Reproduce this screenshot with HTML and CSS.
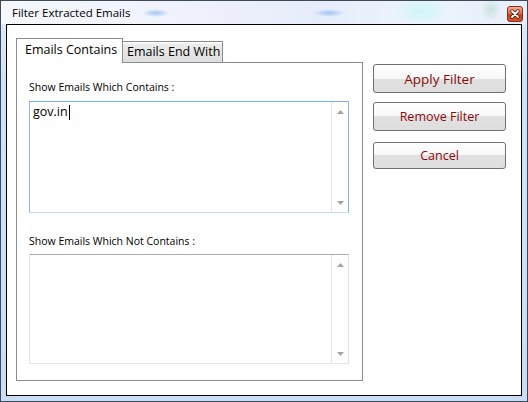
FILE: index.html
```html
<!DOCTYPE html>
<html>
<head>
<meta charset="utf-8">
<link rel="stylesheet" href="styles.css">
</head>
<body>
<div class="window">
  <div class="titlebar">
    <span class="title">Filter Extracted Emails</span>
    <span class="close">
      <svg width="16" height="16" viewBox="0 0 16 16">
        <defs>
          <linearGradient id="cg" x1="0" y1="0" x2="0" y2="1">
            <stop offset="0" stop-color="#f0b3a2"/>
            <stop offset="0.45" stop-color="#dc6f52"/>
            <stop offset="0.55" stop-color="#c8401f"/>
            <stop offset="1" stop-color="#d2552f"/>
          </linearGradient>
        </defs>
        <rect x="0.5" y="0.5" width="15" height="15" rx="2.5" fill="url(#cg)" stroke="#8a2f1a"/>
        <path d="M5 5 L11 11 M11 5 L5 11" stroke="#5a1a0c" stroke-width="3.4" stroke-linecap="round"/>
        <path d="M5 5 L11 11 M11 5 L5 11" stroke="#ffffff" stroke-width="1.8" stroke-linecap="round"/>
      </svg>
    </span>
  </div>
  <div class="client">
    <div class="tabs">
      <div class="tabstrip">
        <div class="tab active">Emails Contains</div>
        <div class="tab inactive">Emails End With</div>
      </div>
      <div class="panel">
        <div class="label first">Show Emails Which Contains :</div>
        <div class="textbox focused">
          <div class="text">gov.in<span class="caret"></span></div>
          <div class="vscroll">
            <svg class="arrow" width="7" height="4" viewBox="0 0 7 4"><path d="M0 4 L3.5 0 L7 4 Z" fill="#a3a3a3"/></svg>
            <svg class="arrow" width="7" height="4" viewBox="0 0 7 4"><path d="M0 0 L7 0 L3.5 4 Z" fill="#a3a3a3"/></svg>
          </div>
        </div>
        <div class="label second">Show Emails Which Not Contains :</div>
        <div class="textbox plain">
          <div class="text"></div>
          <div class="vscroll">
            <svg class="arrow" width="7" height="4" viewBox="0 0 7 4"><path d="M0 4 L3.5 0 L7 4 Z" fill="#a3a3a3"/></svg>
            <svg class="arrow" width="7" height="4" viewBox="0 0 7 4"><path d="M0 0 L7 0 L3.5 4 Z" fill="#a3a3a3"/></svg>
          </div>
        </div>
      </div>
    </div>
    <div class="buttons">
      <div class="btn apply">Apply Filter</div>
      <div class="btn remove">Remove Filter</div>
      <div class="btn cancel">Cancel</div>
    </div>
  </div>
</div>
</body>
</html>
```
FILE: styles.css
```css
html, body {
  margin: 0;
  padding: 0;
}
body {
  width: 528px;
  height: 402px;
  overflow: hidden;
  font-family: "Open Sans", "Noto Sans", sans-serif;
}
.window {
  box-sizing: border-box;
  width: 528px;
  height: 402px;
  border: 1px solid #3e4a58;
  padding: 0 5px 5px 5px;
  display: flex;
  flex-direction: column;
  background:
    linear-gradient(90deg, rgba(255,255,255,0) 0, rgba(255,255,255,0) 100%),
    linear-gradient(180deg, #e6eefb 0, #dde9f8 6%, #cfe2f7 20%, #c9def6 100%);
}
.titlebar {
  height: 23px;
  display: flex;
  align-items: center;
  justify-content: space-between;
  margin: 0 -5px;
  padding: 0 4px 0 11px;
  background:
    radial-gradient(ellipse 14px 4px at 155px 12px, rgba(150,190,240,0.85), rgba(150,190,240,0) 100%),
    radial-gradient(ellipse 16px 4px at 328px 12px, rgba(150,190,240,0.85), rgba(150,190,240,0) 100%),
    radial-gradient(ellipse 30px 14px at 420px 10px, rgba(200,245,250,0.9), rgba(200,245,250,0) 100%),
    radial-gradient(ellipse 10px 12px at 490px 8px, rgba(190,225,215,0.8), rgba(190,225,215,0) 100%),
    linear-gradient(90deg, #f6f8fe 0, #eef1fc 40%, #e7ecfb 60%, #eef5fd 80%, #e8edfb 100%);
}
.title {
  font-size: 11.5px;
  color: #000;
  line-height: 14px;
  margin-top: 1px;
}
.close {
  display: flex;
  width: 16px;
  height: 16px;
  margin-top: 2px;
}
.client {
  flex: 1;
  background: #ffffff;
  border: 1px solid #000000;
  display: flex;
  align-items: flex-start;
  padding: 13px 0 0 9px;
}
.tabs {
  width: 347px;
  display: flex;
  flex-direction: column;
}
.tabstrip {
  height: 24px;
  display: flex;
  align-items: flex-end;
}
.tab {
  box-sizing: border-box;
  border: 1px solid #898c95;
  border-bottom: none;
  font-size: 12.5px;
  color: #000;
  white-space: nowrap;
}
.tab.active {
  position: relative;
  z-index: 2;
  width: 107px;
  height: 25px;
  margin-bottom: -1px;
  background: #ffffff;
  padding: 3px 0 0 8px;
  line-height: 16px;
}
.tab.inactive {
  width: 101px;
  height: 21px;
  margin-left: -1px;
  background: linear-gradient(180deg, #ffffff 0, #ffffff 1px, #ececec 2px, #dedede 100%);
  padding: 2px 0 0 4px;
  line-height: 16px;
}
.panel {
  box-sizing: border-box;
  height: 319px;
  border: 1px solid #898c95;
  background: #ffffff;
  padding: 0 13px 0 12px;
  display: flex;
  flex-direction: column;
}
.label {
  font-size: 10.5px;
  line-height: 14px;
  height: 14px;
  color: #000;
  white-space: nowrap;
}
.label.first {
  margin-top: 17px;
  margin-bottom: 7px;
}
.label.second {
  margin-top: 21px;
  margin-bottom: 6px;
}
.textbox {
  box-sizing: border-box;
  width: 320px;
  display: flex;
  border: 1px solid;
}
.textbox.focused {
  height: 112px;
  border-color: #7fb0e4 #86b5e6 #c5dbf1 #8ab7e6;
}
.textbox.plain {
  height: 110px;
  border-color: #abadb3 #dbdfe6 #e3e9ef #e2e3ea;
}
.text {
  flex: 1;
  padding: 2px 3px;
  font-size: 12.5px;
  line-height: 16px;
  color: #000;
  display: flex;
  align-items: flex-start;
}
.caret {
  display: inline-block;
  width: 1px;
  height: 15px;
  background: #000;
  margin-left: 1px;
  margin-top: 1px;
}
.vscroll {
  width: 16px;
  border-left: 1px solid #e3e3e3;
  display: flex;
  flex-direction: column;
  justify-content: space-between;
  align-items: center;
  padding: 8px 0 7px 0;
}
.arrow {
  display: block;
}
.buttons {
  margin: 26px 0 0 10px;
  display: flex;
  flex-direction: column;
  width: 133px;
}
.btn {
  box-sizing: border-box;
  border: 1px solid #707070;
  border-radius: 3px;
  background: linear-gradient(180deg, #fefefe 0, #f8f8f8 50%, #e1e1e1 50%, #dedede 100%);
  color: #8b0a0a;
  text-align: center;
  display: flex;
  align-items: center;
  justify-content: center;
  white-space: nowrap;
}
.btn.apply {
  height: 29px;
  font-size: 13.5px;
}
.btn.remove {
  height: 29px;
  margin-top: 9px;
  font-size: 12.5px;
}
.btn.cancel {
  height: 27px;
  margin-top: 11px;
  font-size: 12.5px;
}
```
